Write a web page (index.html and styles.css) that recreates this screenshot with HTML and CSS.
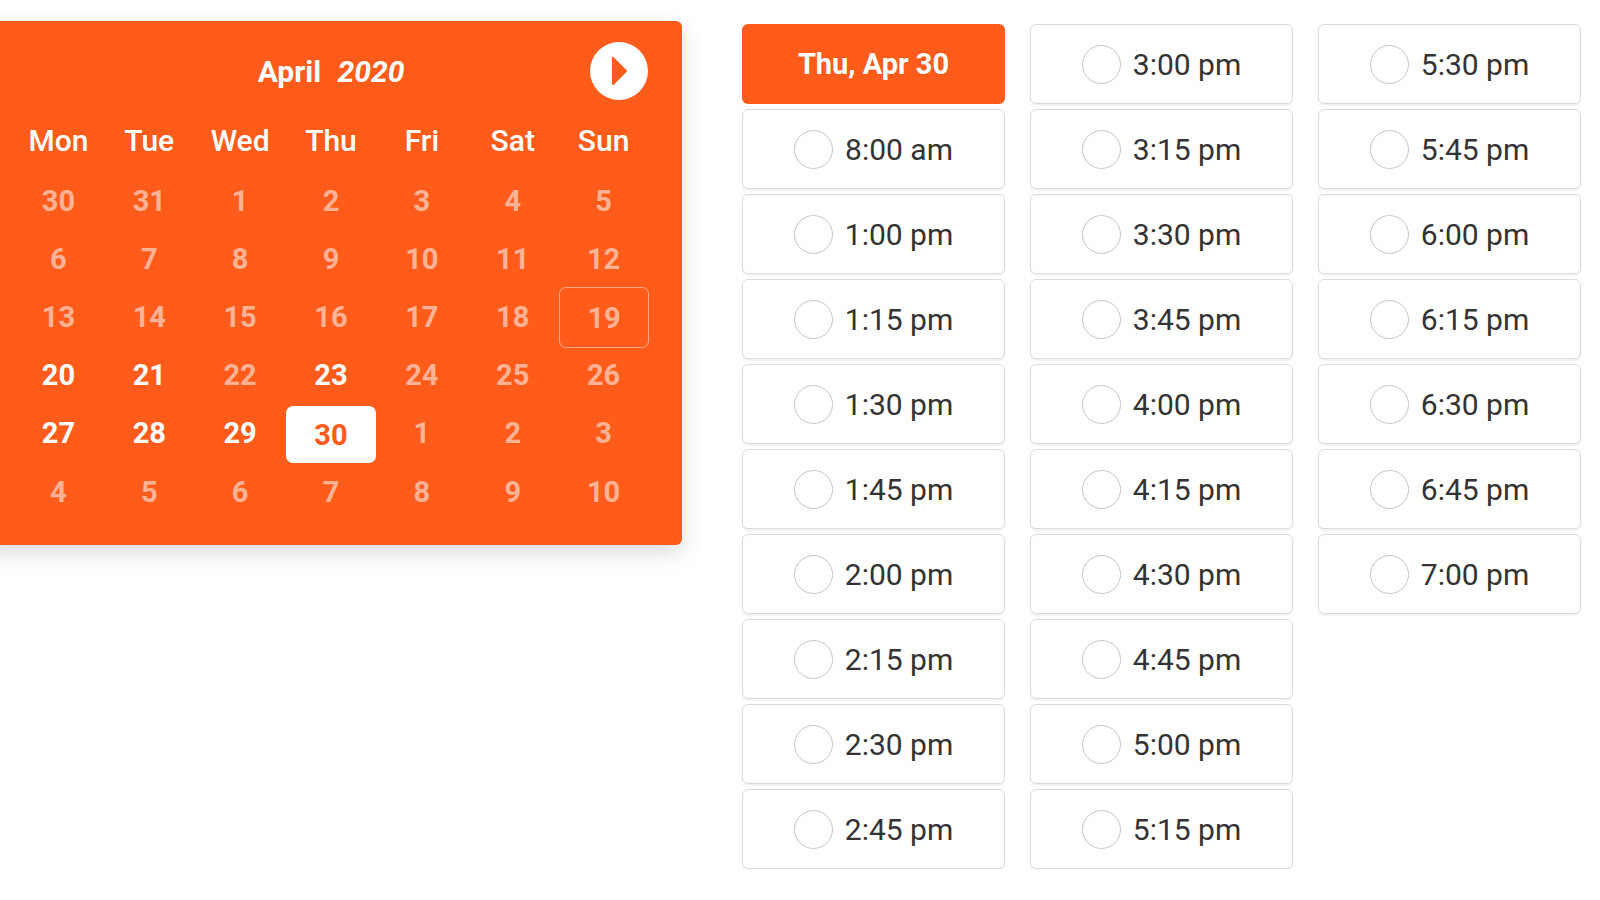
FILE: index.html
```html
<!DOCTYPE html>
<html lang="en">
<head>
    <meta charset="UTF-8">
    <meta name="viewport" content="width=device-width, initial-scale=1.0">
    <title>Book a time</title>
    <link rel="stylesheet" href="styles.css">
</head>
<body>
    <div class="page">
        <div class="calendar">
            <div class="cal-head">
                <span></span>
                <div class="month">April <em>2020</em></div>
                <button class="next" aria-label="Next month">
                    <svg width="60" height="60" viewBox="0 0 60 60">
                        <circle cx="30" cy="30" r="29" fill="#fff"/>
                        <path d="M24 17 L37 30 L24 43 Z" fill="#ff5c1c" stroke="#ff5c1c" stroke-width="2" stroke-linejoin="round"/>
                    </svg>
                </button>
            </div>

            <div class="weekdays">
                <span>Mon</span><span>Tue</span><span>Wed</span><span>Thu</span><span>Fri</span><span>Sat</span><span>Sun</span>
            </div>

            <div class="days">
                <span class="day">30</span><span class="day">31</span><span class="day">1</span><span class="day">2</span><span class="day">3</span><span class="day">4</span><span class="day">5</span>
                <span class="day">6</span><span class="day">7</span><span class="day">8</span><span class="day">9</span><span class="day">10</span><span class="day">11</span><span class="day">12</span>
                <span class="day">13</span><span class="day">14</span><span class="day">15</span><span class="day">16</span><span class="day">17</span><span class="day">18</span><span class="day today">19</span>
                <span class="day open">20</span><span class="day open">21</span><span class="day">22</span><span class="day open">23</span><span class="day">24</span><span class="day">25</span><span class="day">26</span>
                <span class="day open">27</span><span class="day open">28</span><span class="day open">29</span><span class="day open selected">30</span><span class="day">1</span><span class="day">2</span><span class="day">3</span>
                <span class="day">4</span><span class="day">5</span><span class="day">6</span><span class="day">7</span><span class="day">8</span><span class="day">9</span><span class="day">10</span>
            </div>
        </div>

        <div class="slots">
            <div class="slot-col">
                <div class="slot-date">Thu, Apr 30</div>
                <label class="slot"><span class="radio"></span>8:00 am</label>
                <label class="slot"><span class="radio"></span>1:00 pm</label>
                <label class="slot"><span class="radio"></span>1:15 pm</label>
                <label class="slot"><span class="radio"></span>1:30 pm</label>
                <label class="slot"><span class="radio"></span>1:45 pm</label>
                <label class="slot"><span class="radio"></span>2:00 pm</label>
                <label class="slot"><span class="radio"></span>2:15 pm</label>
                <label class="slot"><span class="radio"></span>2:30 pm</label>
                <label class="slot"><span class="radio"></span>2:45 pm</label>
            </div>
            <div class="slot-col">
                <label class="slot"><span class="radio"></span>3:00 pm</label>
                <label class="slot"><span class="radio"></span>3:15 pm</label>
                <label class="slot"><span class="radio"></span>3:30 pm</label>
                <label class="slot"><span class="radio"></span>3:45 pm</label>
                <label class="slot"><span class="radio"></span>4:00 pm</label>
                <label class="slot"><span class="radio"></span>4:15 pm</label>
                <label class="slot"><span class="radio"></span>4:30 pm</label>
                <label class="slot"><span class="radio"></span>4:45 pm</label>
                <label class="slot"><span class="radio"></span>5:00 pm</label>
                <label class="slot"><span class="radio"></span>5:15 pm</label>
            </div>
            <div class="slot-col">
                <label class="slot"><span class="radio"></span>5:30 pm</label>
                <label class="slot"><span class="radio"></span>5:45 pm</label>
                <label class="slot"><span class="radio"></span>6:00 pm</label>
                <label class="slot"><span class="radio"></span>6:15 pm</label>
                <label class="slot"><span class="radio"></span>6:30 pm</label>
                <label class="slot"><span class="radio"></span>6:45 pm</label>
                <label class="slot"><span class="radio"></span>7:00 pm</label>
            </div>
        </div>
    </div>
</body>
</html>
```

FILE: styles.css
```css
body {
    margin: 0;
    background: #fff;
    font-family: Roboto, "Liberation Sans", Arial, sans-serif;
    overflow: hidden;
}
.page {
    display: flex;
    align-items: flex-start;
    gap: 60px;
    padding-top: 21px;
}

/* calendar */
.calendar {
    width: 703px;
    margin-left: -21px;
    box-sizing: border-box;
    padding: 20px 33px 24px 34px;
    background: #ff5c1c;
    border-radius: 6px;
    box-shadow: 0 8px 22px rgba(0, 0, 0, 0.14);
    color: #fff;
}
.cal-head {
    display: grid;
    grid-template-columns: 60px 1fr 60px;
    align-items: center;
    height: 60px;
    margin-bottom: 11px;
}
.month {
    text-align: center;
    font-size: 30px;
    font-weight: bold;
    word-spacing: 9px;
}
.month em {
    font-style: italic;
}
.next {
    width: 60px;
    height: 60px;
    padding: 0;
    border: none;
    background: none;
    cursor: pointer;
}
.next svg {
    display: block;
}
.weekdays, .days {
    display: grid;
    grid-template-columns: repeat(7, 1fr);
}
.weekdays {
    margin-bottom: 2px;
}
.weekdays span {
    height: 58px;
    line-height: 58px;
    text-align: center;
    font-size: 30px;
    font-weight: 500;
}
.day {
    height: 58px;
    display: flex;
    align-items: center;
    justify-content: center;
    font-size: 29px;
    font-weight: bold;
    color: rgba(255, 255, 255, 0.55);
    border-radius: 7px;
    box-sizing: border-box;
}
.day.open {
    color: #fff;
}
.day.today {
    border: 1.5px solid rgba(255, 255, 255, 0.45);
    height: 61px;
    margin: -1px 0 -2px 1px;
}
.day.selected {
    background: #fff;
    color: #ff5c1c;
    height: 57px;
    margin-top: 2px;
}

/* time slots */
.slots {
    display: flex;
    gap: 25px;
    margin-top: 3px;
}
.slot-col {
    display: flex;
    flex-direction: column;
    gap: 5px;
    width: 263px;
}
.slot-date, .slot {
    height: 80px;
    box-sizing: border-box;
    border-radius: 6px;
    display: flex;
    align-items: center;
    justify-content: center;
    font-size: 30px;
}
.slot-date {
    background: #ff5c1c;
    color: #fff;
    font-weight: bold;
    font-size: 29px;
}
.slot {
    background: #fff;
    border: 1.5px solid #dcdcdc;
    box-shadow: 0 2px 2px rgba(0, 0, 0, 0.06);
    color: #333;
    gap: 12px;
    cursor: pointer;
}
.radio {
    width: 39px;
    height: 39px;
    box-sizing: border-box;
    border: 1.5px solid #c6c6c6;
    border-radius: 50%;
}
```
